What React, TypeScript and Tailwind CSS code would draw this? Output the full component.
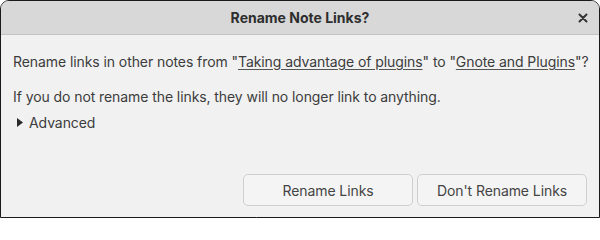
export default function App() {
  return (
    <div className="w-[600px] h-[218px] bg-white">
      <div
        className="flex flex-col h-full border border-[#1a1a1a] rounded-t-[9px] overflow-hidden bg-[#f1f1f1] text-[#3c3c3c]"
        style={{ fontFamily: 'Inter, "Noto Sans", sans-serif' }}
      >
        {/* Header */}
        <div className="relative flex items-center justify-center h-[34px] shrink-0 bg-[#d8d8d8] border-b border-[#c4c4c4]">
          <span className="text-[14px] font-bold text-[#2e2e2e]">Rename Note Links?</span>
          <button className="absolute right-[8px] top-[9px] w-[16px] h-[16px] flex items-center justify-center text-[#333]">
            <svg width="10" height="10" viewBox="0 0 10 10">
              <path d="M1.5 1.5 L8.5 8.5 M8.5 1.5 L1.5 8.5" stroke="currentColor" strokeWidth="2" strokeLinecap="round" />
            </svg>
          </button>
        </div>

        {/* Body */}
        <div className="flex flex-col flex-1 px-3 pt-[18px] pb-[11px] tracking-[-0.08px]">
          <p className="text-[14px] leading-[17px] whitespace-nowrap">
            Rename links in other notes from "<span className="underline underline-offset-2 decoration-[#555]">Taking advantage of plugins</span>" to "<span className="underline underline-offset-2 decoration-[#555]">Gnote and Plugins</span>"?
          </p>
          <p className="text-[14px] leading-[17px] mt-[18px] whitespace-nowrap">
            If you do not rename the links, they will no longer link to anything.
          </p>
          <div className="flex items-center gap-[6px] mt-[9px] pl-[4px] text-[14px] leading-[17px]">
            <svg width="6" height="9" viewBox="0 0 6 9">
              <path d="M0 0 L6 4.5 L0 9 Z" fill="#2a2a2a" />
            </svg>
            <span>Advanced</span>
          </div>

          <div className="flex justify-end gap-[4px] mt-auto">
            <button className="w-[170px] h-[32px] rounded-[5px] border border-[#cfcfcf] bg-[#f4f4f4] text-[14px] text-[#444]">
              Rename Links
            </button>
            <button className="w-[170px] h-[32px] rounded-[5px] border border-[#cfcfcf] bg-[#f4f4f4] text-[14px] text-[#444]">
              Don't Rename Links
            </button>
          </div>
        </div>
      </div>
    </div>
  )
}
